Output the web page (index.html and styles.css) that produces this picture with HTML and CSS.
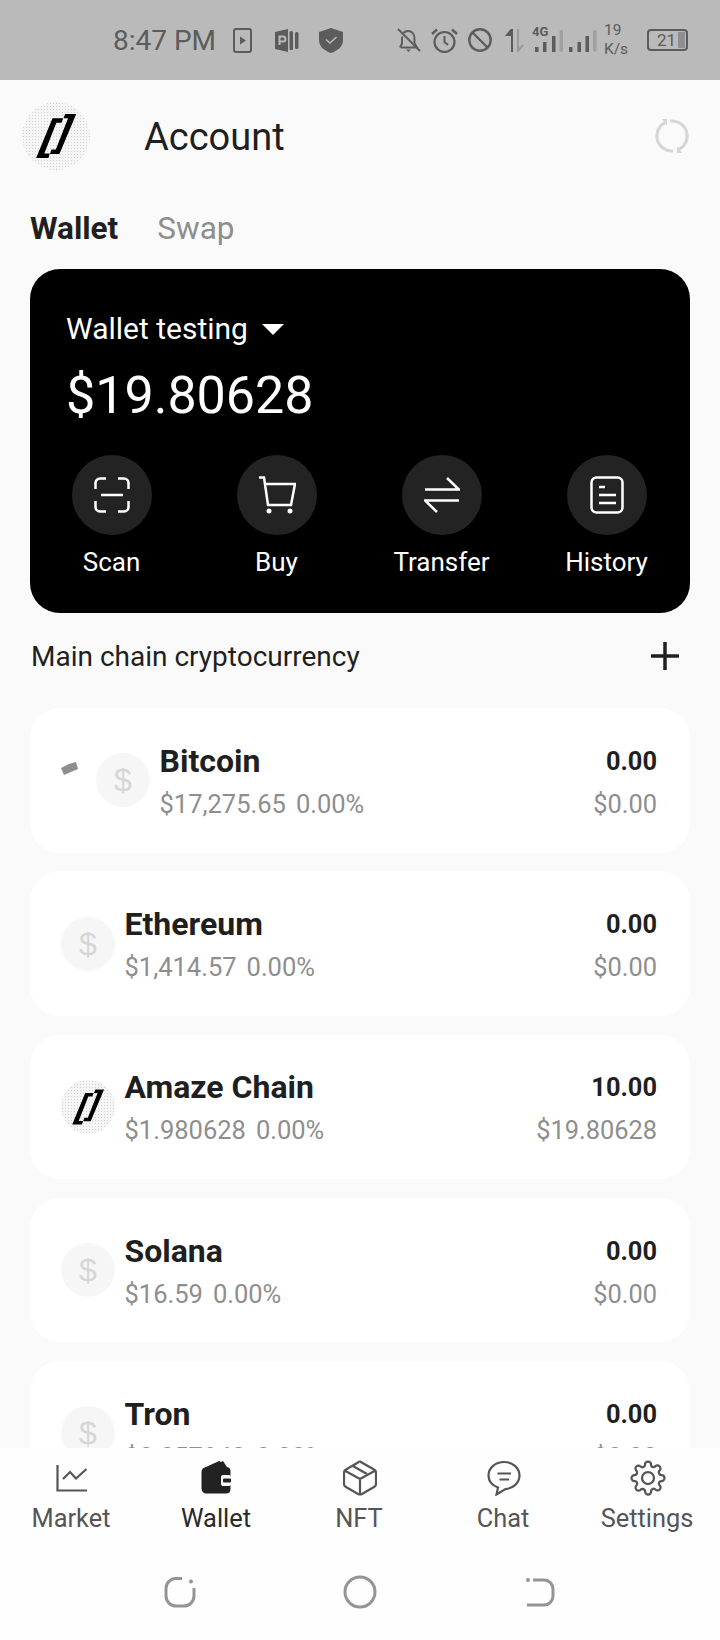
FILE: index.html
```html
<!DOCTYPE html>
<html lang="en">
<head>
  <meta charset="UTF-8">
  <meta name="viewport" content="width=device-width, initial-scale=1">
  <title>Account</title>
  <link rel="stylesheet" href="styles.css">
</head>
<body>

<svg class="defs" width="0" height="0">
  <symbol id="amaze-logo" viewBox="0 0 72 72">
    <polygon points="32.3,17.3 43.6,17.3 41.8,22 36.4,22 23.6,54.6 29.4,54.6 28,59.3 15,59.3"/>
    <polygon points="45.7,12.7 57.4,12.7 39.6,55 29.6,55 31.2,50.4 35.8,50.4 48.8,17.3 44,17.3"/>
  </symbol>
</svg>

<div class="app">
  <div class="status-bar">
    <span class="status-time">8:47 PM</span>
    <svg class="st-play" viewBox="0 0 19 25"><rect x="1" y="1" width="17" height="23" rx="2" fill="none" stroke="#5c5c5c" stroke-width="2"/><path d="M7 8.5 13 12.5 7 16.5z" fill="#5c5c5c"/></svg>
    <svg class="st-p" viewBox="0 0 24 25"><path d="M0 4 13 1V24L0 21z" fill="#5c5c5c"/><path d="M4.500 17V8.500h3.500a2.500 2.500 0 0 1 0 5H4.500" fill="none" stroke="#bababa" stroke-width="2"/><rect x="14.500" y="3" width="3.500" height="19" rx="1.500" fill="#5c5c5c"/><rect x="20" y="4" width="3.500" height="17" rx="1.500" fill="#5c5c5c"/></svg>
    <svg class="st-shield" viewBox="0 0 24 25"><path d="M12 0 24 4V12C24 19 18 23 12 25 6 23 0 19 0 12V4z" fill="#5c5c5c"/><path d="M7 11.5 11 15 17.5 9" fill="none" stroke="#bababa" stroke-width="1.6"/></svg>

    <svg class="st-bell" viewBox="0 0 24 24"><path d="M4 19.5H20L17.5 15.500V10.500C17.500 6 15 3 11 3 9 3 7.500 3.800 6.500 5M5.500 8.500C5 9.300 5 10 5 11V15.500L3 19.500" fill="none" stroke="#5c5c5c" stroke-width="2"/><path d="M9 21.500H14L11.500 24z" fill="#5c5c5c"/><path d="M1 1 23 23" stroke="#5c5c5c" stroke-width="2"/></svg>
    <svg class="st-alarm" viewBox="0 0 27 25"><circle cx="13.500" cy="14" r="10" fill="none" stroke="#5c5c5c" stroke-width="2.200"/><path d="M13.500 8V14L17 17" fill="none" stroke="#5c5c5c" stroke-width="2"/><path d="M1 6 6 1.500M26 6 21 1.500" stroke="#5c5c5c" stroke-width="2.400"/></svg>
    <svg class="st-block" viewBox="0 0 24 24"><circle cx="12" cy="12" r="10.700" fill="none" stroke="#5c5c5c" stroke-width="2.400"/><path d="M4.500 4.500 19.500 19.500" stroke="#5c5c5c" stroke-width="2.400"/></svg>
    <svg class="st-arrows" viewBox="0 0 20 23"><path d="M7 0V23M7 0 2 6H7" fill="#5c5c5c" stroke="#5c5c5c" stroke-width="2"/><path d="M13 0V22L18 16" fill="none" stroke="#9a9a9a" stroke-width="2"/></svg>
    <svg class="st-signal" viewBox="0 0 65 26">
      <text class="st-4g" x="0" y="10">4G</text>
      <rect x="3" y="21" width="3.500" height="5"/><rect x="11" y="16" width="3.500" height="10"/><rect x="20" y="10" width="3.500" height="16"/><rect x="27.500" y="4" width="3.500" height="22" rx="1.700" class="st-off"/>
      <rect x="37" y="21" width="3.500" height="5"/><rect x="45.500" y="16" width="3.500" height="10"/><rect x="53.500" y="10" width="3.500" height="16"/><rect x="61" y="4" width="3.500" height="22" rx="1.700" class="st-off"/>
    </svg>
    <div class="st-speed"><span>19</span><span>K/s</span></div>
    <div class="st-battery">
      <span class="st-battery-num">21</span>
      <span class="st-battery-fill"></span>
    </div>
  </div>

  <div class="main">
    <div class="header">
      <svg class="logo"><use href="#amaze-logo"/></svg>
      <div class="header-title">Account</div>
      <svg class="refresh" viewBox="0 0 36 36"><path d="M11 4.700A15 15 0 0 0 19 33M25 31.300A15 15 0 0 0 16 3.100" fill="none" stroke="#d6d6d6" stroke-width="3"/><path d="M8 1 13 1 13 8zM28 35 23 35 23 28z" fill="#d6d6d6"/></svg>
    </div>

    <div class="tabs">
      <span class="tab tab-active">Wallet</span>
      <span class="tab">Swap</span>
    </div>

    <div class="wallet-card">
      <div class="wallet-name">Wallet testing <span class="caret"></span></div>
      <div class="wallet-balance">$19.80628</div>
      <div class="wallet-actions">
        <div class="action">
          <div class="action-icon">
            <svg width="36" height="36" viewBox="0 0 36 36"><path d="M12 1.500H6A4.500 4.500 0 0 0 1.500 6V12M24 1.500H30A4.500 4.500 0 0 1 34.500 6V12M1.500 24V30A4.500 4.500 0 0 0 6 34.500H12M34.500 24V30A4.500 4.500 0 0 1 30 34.500H24M7 18H29"/></svg>
          </div>
          <span>Scan</span>
        </div>
        <div class="action">
          <div class="action-icon">
            <svg width="38" height="38" viewBox="0 0 38 38"><path d="M1 1.500H6L10 29H33L37 8H7"/><circle class="dot" cx="11" cy="35" r="2.500"/><circle class="dot" cx="32" cy="35" r="2.500"/></svg>
          </div>
          <span>Buy</span>
        </div>
        <div class="action">
          <div class="action-icon">
            <svg width="36" height="36" viewBox="0 0 36 36"><path d="M1 12.500H35L23 1M35 23.500H1L13 35"/></svg>
          </div>
          <span>Transfer</span>
        </div>
        <div class="action">
          <div class="action-icon">
            <svg width="34" height="38" viewBox="0 0 34 38"><rect x="1.500" y="1.500" width="31" height="35" rx="5"/><path d="M9 11H15M9 19H26M9 27H26"/></svg>
          </div>
          <span>History</span>
        </div>
      </div>
    </div>

    <div class="list-title">
      <span>Main chain cryptocurrency</span>
      <svg class="plus" viewBox="0 0 28 28"><path d="M14 0V28M0 14H28"/></svg>
    </div>

    <div class="coin-list">
      <div class="coin">
        <svg class="coin-rag" viewBox="0 0 17 13"><polygon points="0,6 8,2 15,0 17,7 3,13"/></svg>
        <div class="coin-icon">$</div>
        <div class="coin-info">
          <div class="coin-name">Bitcoin</div>
          <div class="coin-price"><span>$17,275.65</span><span>0.00%</span></div>
        </div>
        <div class="coin-amount"><b>0.00</b><span>$0.00</span></div>
      </div>
      <div class="coin">
        <div class="coin-icon">$</div>
        <div class="coin-info">
          <div class="coin-name">Ethereum</div>
          <div class="coin-price"><span>$1,414.57</span><span>0.00%</span></div>
        </div>
        <div class="coin-amount"><b>0.00</b><span>$0.00</span></div>
      </div>
      <div class="coin">
        <div class="coin-icon coin-icon-logo"><svg width="54" height="54"><use href="#amaze-logo"/></svg></div>
        <div class="coin-info">
          <div class="coin-name">Amaze Chain</div>
          <div class="coin-price"><span>$1.980628</span><span>0.00%</span></div>
        </div>
        <div class="coin-amount"><b>10.00</b><span>$19.80628</span></div>
      </div>
      <div class="coin">
        <div class="coin-icon">$</div>
        <div class="coin-info">
          <div class="coin-name">Solana</div>
          <div class="coin-price"><span>$16.59</span><span>0.00%</span></div>
        </div>
        <div class="coin-amount"><b>0.00</b><span>$0.00</span></div>
      </div>
      <div class="coin">
        <div class="coin-icon">$</div>
        <div class="coin-info">
          <div class="coin-name">Tron</div>
          <div class="coin-price"><span>$0.057843</span><span>0.00%</span></div>
        </div>
        <div class="coin-amount"><b>0.00</b><span>$0.00</span></div>
      </div>
    </div>
  </div>

  <div class="bottom">
    <div class="tabbar">
      <div class="tabbar-item">
        <svg width="32" height="36" viewBox="0 0 32 36"><path d="M1.500 5V30.500H31M7 19 14 12 20 18.500 30.500 9"/></svg>
        <span>Market</span>
      </div>
      <div class="tabbar-item tabbar-active">
        <svg width="30" height="36" viewBox="0 0 30 36"><path class="solid" d="M5 7 18 1 20 2 22 1 26 7H25C28 7 29.500 8.500 29.500 11V29C29.500 32 28 33.500 25 33.500H6C2.500 33.500.5 31.500.5 28V12C.5 9.500 2 7.500 5 7z"/><rect class="slot" x="20" y="15" width="10" height="11" rx="2"/><rect class="solid" x="22" y="18.500" width="8" height="4" rx="1"/></svg>
        <span>Wallet</span>
      </div>
      <div class="tabbar-item">
        <svg width="34" height="36" viewBox="0 0 34 36"><path d="M17 1.500 31 9.500Q33 10.500 33 12.500V24Q33 26 31 27L19 34Q17 35 15 34L3 27Q1 26 1 24V12.500Q1 10.500 3 9.500L15 2.500Q16 1.500 17 1.500zM1.500 10.500 17 19 32.500 10.500M17 19V34.500M10 6 24 14"/></svg>
        <span>NFT</span>
      </div>
      <div class="tabbar-item">
        <svg width="34" height="36" viewBox="0 0 34 36"><path d="M17 2C25.500 2 32.500 8 32.500 15.500S26 28.500 18.500 29L9.500 34.500 11 27.500C5.500 25.500 1.500 21 1.500 15.500 1.500 8 8.500 2 17 2zM10.500 13.500H24M12.500 19.500H22"/></svg>
        <span>Chat</span>
      </div>
      <div class="tabbar-item">
        <svg width="36" height="36" viewBox="0 0 24 24"><circle cx="12" cy="12" r="4"/><path class="thin" d="M19.400 15a1.650 1.650 0 0 0 .33 1.820l.06.06a2 2 0 0 1 0 2.830 2 2 0 0 1-2.830 0l-.06-.06a1.650 1.650 0 0 0-1.820-.33 1.650 1.650 0 0 0-1 1.510V21a2 2 0 0 1-2 2 2 2 0 0 1-2-2v-.09A1.650 1.650 0 0 0 9 19.400a1.650 1.650 0 0 0-1.820.33l-.06.06a2 2 0 0 1-2.830 0 2 2 0 0 1 0-2.830l.06-.06a1.650 1.650 0 0 0 .33-1.820 1.650 1.650 0 0 0-1.510-1H3a2 2 0 0 1-2-2 2 2 0 0 1 2-2h.09A1.650 1.650 0 0 0 4.600 9a1.650 1.650 0 0 0-.33-1.820l-.06-.06a2 2 0 0 1 0-2.830 2 2 0 0 1 2.830 0l.06.06a1.650 1.650 0 0 0 1.820.33H9a1.650 1.650 0 0 0 1-1.510V3a2 2 0 0 1 2-2 2 2 0 0 1 2 2v.09a1.650 1.650 0 0 0 1 1.510 1.650 1.650 0 0 0 1.820-.33l.06-.06a2 2 0 0 1 2.830 0 2 2 0 0 1 0 2.830l-.06.06a1.650 1.650 0 0 0-.33 1.820V9a1.650 1.650 0 0 0 1.510 1H21a2 2 0 0 1 2 2 2 2 0 0 1-2 2h-.09a1.650 1.650 0 0 0-1.510 1z"/></svg>
        <span>Settings</span>
      </div>
    </div>
    <div class="system-nav">
      <svg width="32" height="32" viewBox="0 0 32 32"><path d="M18 2.500H12A10 10 0 0 0 2 12.500V20A10 10 0 0 0 12 30H20A10 10 0 0 0 30 20V12"/><circle cx="27" cy="5.500" r="2"/></svg>
      <svg width="34" height="34" viewBox="0 0 34 34"><circle class="ring" cx="17" cy="17" r="15"/></svg>
      <svg width="30" height="32" viewBox="0 0 30 32"><path d="M8 4H19A9 9 0 0 1 28 13V20A9 9 0 0 1 19 29H2"/><circle cx="3" cy="4" r="2"/></svg>
    </div>
  </div>
</div>

</body>
</html>
```

FILE: styles.css
```css
* {
  box-sizing: border-box;
}

body {
  margin: 0;
  font-family: Roboto, "Liberation Sans", sans-serif;
  background: #fafafa;
  color: #1f1f1f;
}

.defs {
  display: block;
  height: 0;
}

.app {
  width: 720px;
  height: 1640px;
  display: flex;
  flex-direction: column;
  overflow: hidden;
}

/* status bar */
.status-bar {
  height: 80px;
  flex: none;
  background: #bababa;
  color: #5c5c5c;
  display: flex;
  align-items: center;
  padding-left: 113px;
}

.status-time {
  font-size: 28px;
  width: 102px;
  white-space: nowrap;
}

.st-play { width: 19px; height: 25px; margin-left: 18px; }
.st-p { width: 24px; height: 25px; margin-left: 23px; }
.st-shield { width: 24px; height: 25px; margin-left: 20px; }
.st-bell { width: 24px; height: 24px; margin-left: 54px; }
.st-alarm { width: 27px; height: 25px; margin-left: 10px; }
.st-block { width: 24px; height: 24px; margin-left: 10px; }
.st-arrows { width: 20px; height: 23px; margin-left: 13px; }
.st-signal { width: 65px; height: 26px; margin-left: 7px; fill: #5c5c5c; margin-top: -2px; overflow: visible; }
.st-signal .st-off { fill: #a0a0a0; }
.st-4g { font-family: Roboto, sans-serif; font-size: 13px; font-weight: 700; }

.st-speed {
  width: 24px;
  margin-left: 7px;
  display: flex;
  flex-direction: column;
  font-size: 15.5px;
  line-height: 19px;
}

.st-battery {
  width: 41px;
  height: 22px;
  margin-left: 19px;
  border: 2px solid #5c5c5c;
  border-radius: 4px;
  display: flex;
  align-items: center;
  justify-content: flex-end;
  gap: 2px;
  padding-right: 1px;
  font-size: 17px;
}

.st-battery-fill {
  width: 7px;
  height: 16px;
  background: #8f8f8f;
}

/* main */
.main {
  flex: 1;
  min-height: 0;
  overflow: hidden;
  padding: 0 30px;
}

.header {
  display: flex;
  align-items: center;
  height: 68px;
  margin: 22px 0 0 -8px;
}

.logo {
  width: 68px;
  height: 68px;
  border-radius: 50%;
  background: #f5f5f5 radial-gradient(#d2d2d2 0.7px, transparent 0.9px) 0 0 / 3px 3px;
  fill: #000;
}

.header-title {
  font-size: 38px;
  margin-left: 54px;
  padding-top: 2px;
  flex: 1;
}

.refresh {
  width: 36px;
  height: 36px;
  margin-right: 0;
}

.tabs {
  display: flex;
  gap: 39px;
  margin-top: 41px;
  font-size: 31.500px;
  line-height: 36px;
  color: #8e8e8e;
}

.tab-active {
  font-weight: 700;
  color: #1f1f1f;
}

.wallet-card {
  margin-top: 22px;
  height: 344px;
  background: #000;
  color: #fff;
  border-radius: 30px;
  padding-top: 42px;
}

.wallet-name {
  font-size: 30px;
  line-height: 36px;
  padding-left: 36px;
  display: flex;
  align-items: center;
  gap: 14px;
}

.caret {
  width: 0;
  height: 0;
  border-left: 11px solid transparent;
  border-right: 11px solid transparent;
  border-top: 11px solid #fff;
}

.wallet-balance {
  font-size: 52px;
  line-height: 60px;
  padding-left: 36px;
  margin-top: 19px;
}

.wallet-actions {
  display: grid;
  grid-template-columns: repeat(4, 1fr);
  margin: 29px 1px 0 -1px;
}

.action {
  display: flex;
  flex-direction: column;
  align-items: center;
  font-size: 26px;
  line-height: 30px;
  gap: 12px;
}

.action-icon {
  width: 80px;
  height: 80px;
  border-radius: 50%;
  background: #232323;
  display: flex;
  align-items: center;
  justify-content: center;
}

.action-icon svg {
  fill: none;
  stroke: #fff;
  stroke-width: 2.500;
}

.action-icon .dot {
  fill: #fff;
  stroke: none;
}

.list-title {
  display: flex;
  align-items: center;
  justify-content: space-between;
  height: 32px;
  margin-top: 27px;
  padding: 0 11px 0 1px;
  font-size: 28px;
}

.plus {
  width: 28px;
  height: 28px;
  fill: none;
  stroke: #1f1f1f;
  stroke-width: 3.500;
}

.coin-list {
  display: flex;
  flex-direction: column;
  gap: 18.800px;
  margin-top: 36px;
}

.coin {
  height: 144.500px;
  flex: none;
  background: #fff;
  border-radius: 30px;
  display: flex;
  align-items: center;
  padding: 0 33px 0 31px;
}

.coin-rag {
  width: 17px;
  height: 13px;
  fill: #8d8f8e;
  margin: 0 18px 24px 0;
}

.coin-icon {
  width: 54px;
  height: 54px;
  flex: none;
  border-radius: 50%;
  background: #f6f6f6;
  color: #d6d6d6;
  font-family: "Liberation Sans", sans-serif;
  font-size: 32px;
  line-height: 54px;
  text-align: center;
  margin-right: 9.500px;
}

.coin-icon-logo {
  background: #f5f5f5 radial-gradient(#d2d2d2 0.7px, transparent 0.9px) 0 0 / 3px 3px;
  fill: #000;
}

.coin-icon-logo svg {
  display: block;
}

.coin-info {
  flex: 1;
  min-width: 0;
  padding-top: 1px;
}

.coin-name {
  font-size: 32px;
  font-weight: 700;
  line-height: 36px;
}

.coin-price {
  display: flex;
  gap: 10px;
  font-size: 25.500px;
  line-height: 30px;
  margin-top: 10px;
  color: #8e8e8e;
}

.coin-amount {
  display: flex;
  flex-direction: column;
  align-items: flex-end;
  font-size: 25.400px;
  line-height: 30px;
  color: #8e8e8e;
  gap: 13px;
  padding-top: 4px;
}

.coin-amount b {
  color: #1f1f1f;
}

/* bottom nav */
.bottom {
  flex: none;
  background: #fefefe;
  height: 192px;
  display: flex;
  flex-direction: column;
}

.tabbar {
  display: grid;
  grid-template-columns: repeat(5, 1fr);
  padding-top: 12px;
  height: 95px;
}

.tabbar-item {
  display: flex;
  flex-direction: column;
  align-items: center;
  gap: 7px;
  font-size: 25.400px;
  line-height: 30px;
  color: #555;
}

.tabbar-item span {
  margin-right: 2px;
}

.tabbar-item svg {
  fill: none;
  stroke: #555;
  stroke-width: 2.200;
}

.tabbar-item .thin {
  stroke-width: 1.500;
}

.tabbar-item circle {
  stroke-width: 1.500;
}

.tabbar-item .solid {
  fill: #222;
  stroke: none;
}

.tabbar-item .slot {
  fill: #fefefe;
  stroke: none;
}

.tabbar-active {
  color: #2a2a2a;
}

.tabbar-active span {
  margin-right: 0;
}

.system-nav {
  flex: 1;
  display: grid;
  grid-template-columns: repeat(3, 1fr);
  padding: 0 90px;
  align-items: center;
  justify-items: center;
}

.system-nav svg {
  fill: none;
  stroke: #949494;
  stroke-width: 3;
}

.system-nav circle {
  fill: #949494;
  stroke: none;
}

.system-nav .ring {
  fill: none;
  stroke: #949494;
}
```
